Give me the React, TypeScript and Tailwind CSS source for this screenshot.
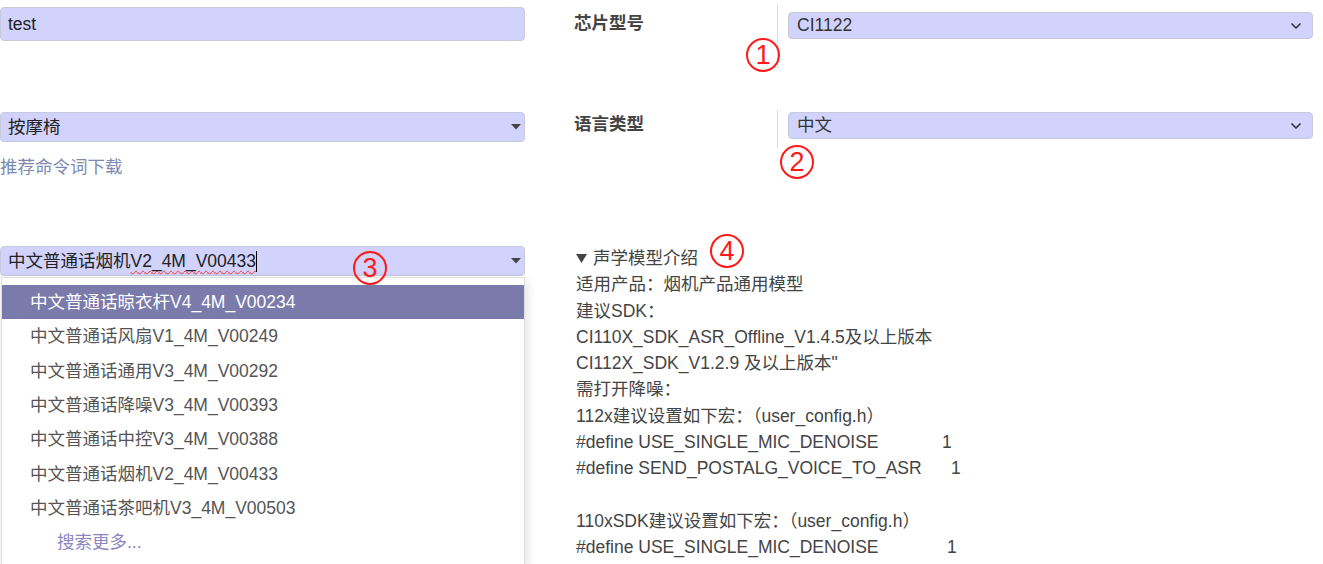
import { ChevronDown } from 'lucide-react';

const FONT = { fontFamily: '"Liberation Sans", "Noto Sans CJK SC", sans-serif' };

const options = [
  '中文普通话晾衣杆V4_4M_V00234',
  '中文普通话风扇V1_4M_V00249',
  '中文普通话通用V3_4M_V00292',
  '中文普通话降噪V3_4M_V00393',
  '中文普通话中控V3_4M_V00388',
  '中文普通话烟机V2_4M_V00433',
  '中文普通话茶吧机V3_4M_V00503',
];

function Caret() {
  return (
    <svg width="10" height="6" viewBox="0 0 10 6" className="shrink-0">
      <path d="M0 0 H10 L5 5.5 Z" fill="#444" />
    </svg>
  );
}

function Mark({ n, className }: { n: string; className: string }) {
  return (
    <div className={`absolute w-[34px] h-[34px] rounded-full border-2 border-[#ff1a1a] text-[#ff1a1a] flex items-center justify-center text-[27px] leading-none ${className}`}>
      {n}
    </div>
  );
}

function ChipSelect({ value }: { value: string }) {
  return (
    <div className="w-[525px] h-[27px] bg-[#d1d3fc] border border-[#c7c9dc] rounded-[4px] flex items-center justify-between pl-[8px] pr-[8px] text-[17.5px] text-[#333]">
      <span>{value}</span>
      <ChevronDown size={16} strokeWidth={2.5} className="text-[#333]" />
    </div>
  );
}

export default function App() {
  return (
    <div className="relative w-[1323px] h-[564px] overflow-hidden bg-white text-[#444]" style={FONT}>
      <div className="flex">
        {/* left column */}
        <div className="w-[525px] shrink-0 flex flex-col">
          <div className="mt-[7px] h-[34px] bg-[#d1d3fc] border border-[#c7c9dc] rounded-[4px] flex items-center px-[7px] text-[17.5px] text-[#222]">
            test
          </div>

          <div className="mt-[71px] h-[30px] bg-[#d1d3fc] border border-[#c7c9dc] rounded-[4px] flex items-center justify-between pl-[7px] pr-[3px] text-[17.5px] text-[#222]">
            <span>按摩椅</span>
            <Caret />
          </div>

          <div className="mt-[12px] text-[17.5px] leading-[26px] text-[#7c89b2]">推荐命令词下载</div>

          <div className="mt-[66px] h-[30px] bg-[#d1d3fc] border border-[#c7c9dc] rounded-[4px] flex items-center justify-between pl-[7px] pr-[3px] text-[17.5px] text-[#222]">
            <span className="flex items-center">
              中文普通话烟机
              <span className="underline decoration-wavy decoration-[#ff3030] decoration-1 underline-offset-[3px]">V2_4M_V00433</span>
              <span className="w-px h-[21px] bg-black" />
            </span>
            <Caret />
          </div>

          <div className="mt-px ml-px bg-white border border-[#dedede] shadow-[2px_4px_10px_rgba(0,0,0,0.12)] pt-[7px] pb-[10px] text-[17.5px]">
            {options.map((o, i) => (
              <div
                key={o}
                className={`h-[34.3px] flex items-center pl-[28px] ${i === 0 ? 'bg-[#7b7bab] text-white' : 'text-[#555]'}`}
              >
                {o}
              </div>
            ))}
            <div className="h-[34px] flex items-center pl-[55px] text-[#8a86c2]">搜索更多...</div>
          </div>
        </div>

        {/* right column */}
        <div className="ml-[49px] flex flex-col">
          <div className="mt-[4px] flex">
            <div className="w-[203px] pt-[6px] font-bold text-[17.5px] text-[#444]">芯片型号</div>
            <div className="h-[64px] border-l border-[#dcdcdc] pl-[10px] pt-[8px]">
              <ChipSelect value="CI1122" />
            </div>
          </div>

          <div className="mt-[42px] flex">
            <div className="w-[203px] pt-[1px] font-bold text-[17.5px] text-[#444]">语言类型</div>
            <div className="h-[38px] border-l border-[#dcdcdc] pl-[10px] pt-[2px]">
              <ChipSelect value="中文" />
            </div>
          </div>

          <div className="mt-[97px] pl-[2px] text-[17.5px] leading-[26.3px] text-[#444]">
            <div className="flex items-center">
              <svg width="11" height="9" viewBox="0 0 11 9" className="mr-[6px]">
                <path d="M0 0 H11 L5.5 9 Z" fill="#444" />
              </svg>
              <span>声学模型介绍</span>
            </div>
            <div>适用产品：烟机产品通用模型</div>
            <div>建议SDK：</div>
            <div>CI110X_SDK_ASR_Offline_V1.4.5及以上版本</div>
            <div>CI112X_SDK_V1.2.9 及以上版本"</div>
            <div>需打开降噪：</div>
            <div>112x建议设置如下宏：（user_config.h）</div>
            <div className="flex">
              <span className="w-[366px]">#define USE_SINGLE_MIC_DENOISE</span>
              <span>1</span>
            </div>
            <div className="flex">
              <span className="w-[375px]">#define SEND_POSTALG_VOICE_TO_ASR</span>
              <span>1</span>
            </div>
            <div className="h-[26.3px]" />
            <div>110xSDK建议设置如下宏：（user_config.h）</div>
            <div className="flex">
              <span className="w-[371px]">#define USE_SINGLE_MIC_DENOISE</span>
              <span>1</span>
            </div>
          </div>
        </div>
      </div>

      <Mark n="1" className="left-[746px] top-[38px]" />
      <Mark n="2" className="left-[780px] top-[145px]" />
      <Mark n="3" className="left-[353px] top-[251px]" />
      <Mark n="4" className="left-[710px] top-[234px]" />
    </div>
  );
}
